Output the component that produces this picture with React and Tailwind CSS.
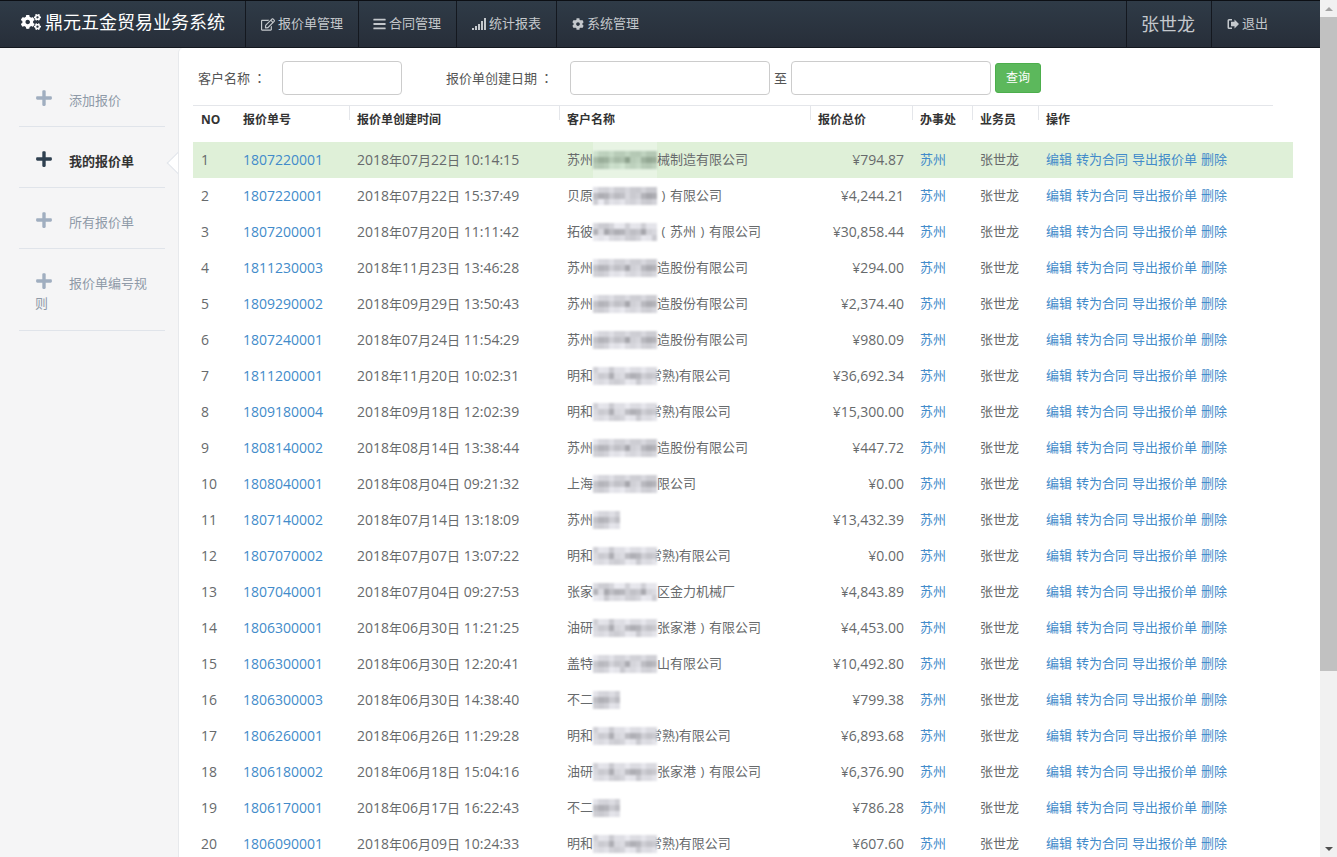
import React from 'react';
import { FaCogs, FaCog, FaRegEdit, FaBars, FaPlus } from 'react-icons/fa';

const FONT = '[font-family:"Open_Sans","Noto_Sans_CJK_SC",sans-serif]';

const rows = [
  ['1807220001', '2018年07月22日 10:14:15', '苏州', 64, '械制造有限公司', '¥794.87'],
  ['1807220001', '2018年07月22日 15:37:49', '贝原', 64, '）有限公司', '¥4,244.21'],
  ['1807200001', '2018年07月20日 11:11:42', '拓彼', 64, '（苏州）有限公司', '¥30,858.44'],
  ['1811230003', '2018年11月23日 13:46:28', '苏州', 64, '造股份有限公司', '¥294.00'],
  ['1809290002', '2018年09月29日 13:50:43', '苏州', 64, '造股份有限公司', '¥2,374.40'],
  ['1807240001', '2018年07月24日 11:54:29', '苏州', 64, '造股份有限公司', '¥980.09'],
  ['1811200001', '2018年11月20日 10:02:31', '明和', 64, '常熟)有限公司', '¥36,692.34'],
  ['1809180004', '2018年09月18日 12:02:39', '明和', 64, '常熟)有限公司', '¥15,300.00'],
  ['1808140002', '2018年08月14日 13:38:44', '苏州', 64, '造股份有限公司', '¥447.72'],
  ['1808040001', '2018年08月04日 09:21:32', '上海', 64, '限公司', '¥0.00'],
  ['1807140002', '2018年07月14日 13:18:09', '苏州', 27, '', '¥13,432.39'],
  ['1807070002', '2018年07月07日 13:07:22', '明和', 64, '常熟)有限公司', '¥0.00'],
  ['1807040001', '2018年07月04日 09:27:53', '张家', 64, '区金力机械厂', '¥4,843.89'],
  ['1806300001', '2018年06月30日 11:21:25', '油研', 64, '张家港）有限公司', '¥4,453.00'],
  ['1806300001', '2018年06月30日 12:20:41', '盖特', 64, '山有限公司', '¥10,492.80'],
  ['1806300003', '2018年06月30日 14:38:40', '不二', 27, '', '¥799.38'],
  ['1806260001', '2018年06月26日 11:29:28', '明和', 64, '常熟)有限公司', '¥6,893.68'],
  ['1806180002', '2018年06月18日 15:04:16', '油研', 64, '张家港）有限公司', '¥6,376.90'],
  ['1806170001', '2018年06月17日 16:22:43', '不二', 27, '', '¥786.28'],
  ['1806090001', '2018年06月09日 10:24:33', '明和', 64, '常熟)有限公司', '¥607.60'],
];

// pixelated stand-in for the redacted part of the customer name
const Redacted = ({ width, seed, tint, overlap }) => {
  const columns = Math.floor(width / 5);
  const grid = [];
  for (let y = 0; y < 3; y++) {
    const cells = [];
    for (let x = 0; x < columns; x++) {
      const n = (seed * 31 + x * x * 17 + x * 43 + y * 71 + x * y * 13) % 100;
      const v = y === 1 ? 165 + Math.round(n * 0.55) : 200 + Math.round(n * 0.35);
      cells.push(tint ? `rgb(${v - 25},${v - 5},${v - 25})` : `rgb(${v},${v},${v + 6})`);
    }
    grid.push(cells);
  }
  return (
    <span
      className={`relative shrink-0 inline-flex flex-col h-[18px] ${overlap ? 'z-10 -mr-[8px]' : ''}`}
      style={{ width }}
    >
      {tint && <span className="absolute inset-x-0 -top-[10px] -bottom-[10px] bg-white/30" />}
      <span className="relative flex flex-col h-full blur-[0.8px]">
        {grid.map((cells, y) => (
          <span key={y} className="flex flex-1">
            {cells.map((c, x) => (
              <span key={x} className="flex-1" style={{ background: c }} />
            ))}
          </span>
        ))}
      </span>
    </span>
  );
};

// full-width brackets sit in the middle of their box in the reference
const Suffix = ({ text }) =>
  text.split(/([（）])/).map((part, k) =>
    k % 2 ? (
      <span key={k} className="inline-block w-[13px] text-center">{part === '（' ? '(' : ')'}</span>
    ) : (
      <span key={k}>{part}</span>
    )
  );

const Colon = () => <span className='[font-family:"Noto_Sans_CJK_TC",sans-serif]'> ：</span>;

const SignalIcon = () => (
  <svg viewBox="0 0 14 12" className="w-[14px] h-[12px]" fill="currentColor">
    <rect x="0" y="10" width="2" height="2" />
    <rect x="3" y="8" width="2" height="4" />
    <rect x="6" y="6" width="2" height="6" />
    <rect x="9" y="3" width="2" height="9" />
    <rect x="12" y="0" width="2" height="12" />
  </svg>
);

const LogoutIcon = () => (
  <svg viewBox="0 0 12 12" className="w-[12px] h-[12px]" fill="currentColor">
    <path d="M5 1H2a1.500 1.500 0 0 0-1.500 1.500v7A1.500 1.500 0 0 0 2 11h3V9.500H2.500a.5.5 0 0 1-.5-.5V3a.5.5 0 0 1 .5-.5H5z" />
    <path d="M4 3.800h3.500V1.500L12 6l-4.500 4.500V8.200H4z" />
  </svg>
);

const NavItem = ({ icon, label, className }) => (
  <div className={`h-full flex items-center gap-[3px] border-l border-[#14181f] text-[13px] text-[#c4c8cc] ${className}`}>
    {icon}
    <span>{label}</span>
  </div>
);

const SideItem = ({ label, active, h, pt }) => (
  <div className={`mx-[19px] border-b border-[#e0e4ea] ${pt} ${h} w-[146px] relative`}>
    <div className={`pl-[16px] pr-[10px] text-[13px] leading-[20px] ${active ? 'font-bold text-[#333]' : 'text-[#8f9aa8]'}`}>
      <FaPlus className={`inline-block w-[18px] h-[18px] mr-[16px] align-[-2px] ${active ? 'text-[#2f4050]' : 'text-[#a0aec0]'}`} />
      {label}
    </div>
  </div>
);

const COLS = 'grid grid-cols-[42px_114px_210px_251px_102px_60px_66px_1fr]';

export default function App() {
  return (
    <div className={`h-screen flex overflow-hidden bg-white text-[13px] ${FONT}`}>
      <div className="flex-1 min-w-0 flex flex-col">
        {/* Top bar */}
        <header className="h-[48px] shrink-0 flex items-center border-t border-b border-t-[#0c0f14] border-b-[#14181f] bg-gradient-to-b from-[#2f3b47] to-[#272e39]">
          <div className="w-[245px] flex items-center pl-[21px] pb-[4px] gap-[4px] text-white text-[18px]">
            <FaCogs className="w-[20px] h-[18px]" />
            <span>鼎元五金贸易业务系统</span>
          </div>
          <NavItem className="w-[113px] pl-[15px]" icon={<FaRegEdit className="w-[14px] h-[13px]" />} label="报价单管理" />
          <NavItem className="w-[98px] pl-[14px]" icon={<FaBars className="w-[13px] h-[14px]" />} label="合同管理" />
          <NavItem className="w-[100px] pl-[15px]" icon={<SignalIcon />} label="统计报表" />
          <NavItem className="w-[570px] pl-[15px]" icon={<FaCog className="w-[12px] h-[12px]" />} label="系统管理" />
          <div className="w-[85px] h-full flex items-center pl-[14px] border-l border-[#14181f] text-[18px] text-[#c4c8cc]">张世龙</div>
          <NavItem className="flex-1 pl-[15px]" icon={<LogoutIcon />} label="退出" />
        </header>

        <div className="flex-1 min-h-0 flex bg-[#f5f5f6]">
          {/* Sidebar */}
          <aside className="w-[178px] shrink-0 pt-[11px] relative">
            <SideItem label="添加报价" h="h-[68px]" pt="pt-[30px]" />
            <SideItem label="我的报价单" active h="h-[61px]" pt="pt-[23px]" />
            <SideItem label="所有报价单" h="h-[61px]" pt="pt-[23px]" />
            <SideItem label="报价单编号规则" h="h-[82px]" pt="pt-[23px]" />
            <div className="absolute left-[170px] top-[107px] w-[16px] h-[16px] rotate-45 bg-white border-l border-b border-[#e0e4ea]" />
          </aside>

          {/* Main */}
          <main className="flex-1 min-w-0 bg-white rounded-tl-[5px] border-l border-[#e7e9ec] relative overflow-hidden pl-[14px]">
            <form className="h-[57px] flex items-start pt-[13px] text-[#555]">
              <label className="w-[89px] pl-[5px] leading-[34px] whitespace-nowrap">客户名称<Colon /></label>
              <input className="w-[120px] h-[34px] rounded border border-[#ccc] bg-white" />
              <label className="ml-[44px] w-[124px] leading-[34px] whitespace-nowrap">报价单创建日期<Colon /></label>
              <input className="w-[200px] h-[34px] rounded border border-[#ccc] bg-white" />
              <span className="w-[21px] pl-[4px] leading-[34px]">至</span>
              <input className="w-[200px] h-[34px] rounded border border-[#ccc] bg-white" />
              <button type="button" className="ml-[4px] mt-[2px] w-[46px] h-[30px] rounded-[3px] border border-[#4cae4c] bg-[#5cb85c] text-white text-[12px]">查询</button>
            </form>

            {/* Table head */}
            <div className={`${COLS} w-[1080px] h-[37px] border-t border-[#e4e6ea] text-[12px] font-bold text-[#333]`}>
              {['NO', '报价单号', '报价单创建时间', '客户名称', '报价总价', '办事处', '业务员', '操作'].map((h, i) => (
                <div key={h} className="relative pl-[8px] pt-[5px]">
                  {i > 1 && <span className="absolute left-0 top-0 h-[14px] w-px bg-[#e4e6ea]" />}
                  {h}
                </div>
              ))}
            </div>

            {/* Table body */}
            <div className="w-[1100px]">
              {rows.map((r, i) => (
                <div key={i} className={`${COLS} h-[36px] items-center text-[#676a6c] ${i === 0 ? 'bg-[#dff0d8]' : ''}`}>
                  <div className="pl-[8px] pb-[2px] text-[14px]">{i + 1}</div>
                  <div className="pl-[8px] pb-[2px] text-[14px] text-[#428bca]">{r[0]}</div>
                  <div className="pl-[8px] text-[14px] whitespace-nowrap">
                    {r[1].split(/([年月日])/).map((part, k) =>
                      k % 2 ? <span key={k} className="text-[13px]">{part}</span> : <span key={k}>{part}</span>
                    )}
                  </div>
                  <div className="pl-[8px] whitespace-nowrap flex items-center">
                    <span>{r[2]}</span>
                    <Redacted
                      width={r[3]}
                      seed={r[2].charCodeAt(0) % 97}
                      tint={i === 0}
                      overlap={r[4].startsWith('常')}
                    />
                    <span>
                      <Suffix text={r[4]} />
                    </span>
                  </div>
                  <div className="pr-[8px] pb-[2px] text-right text-[14px]">{r[5]}</div>
                  <div className="pl-[8px] text-[#428bca]">苏州</div>
                  <div className="pl-[8px]">张世龙</div>
                  <div className="pl-[8px] text-[#428bca] flex gap-[4px] whitespace-nowrap">
                    <a>编辑</a>
                    <a>转为合同</a>
                    <a>导出报价单</a>
                    <a>删除</a>
                  </div>
                </div>
              ))}
            </div>
          </main>
        </div>
      </div>

      {/* Scrollbar */}
      <div className="w-[17px] shrink-0 bg-[#f1f1f1] flex flex-col items-center">
        <div className="h-[17px] flex items-center justify-center">
          <div className="w-0 h-0 border-x-[4px] border-x-transparent border-b-[4px] border-b-[#a3a3a3]" />
        </div>
        <div className="w-full h-[654px] bg-[#c1c1c1]" />
        <div className="flex-1" />
        <div className="h-[17px] flex items-center justify-center">
          <div className="w-0 h-0 border-x-[4px] border-x-transparent border-t-[4px] border-t-[#505050]" />
        </div>
      </div>
    </div>
  );
}
